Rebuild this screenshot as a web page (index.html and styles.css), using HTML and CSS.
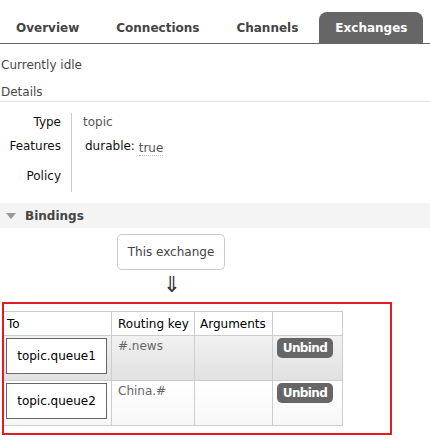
FILE: index.html
```html
<!DOCTYPE html>
<html>
<head>
<meta charset="utf-8">
<link rel="stylesheet" href="styles.css">
</head>
<body>
<nav class="tabs">
  <a class="tab">Overview</a>
  <a class="tab">Connections</a>
  <a class="tab">Channels</a>
  <a class="tab active">Exchanges</a>
</nav>
<p class="status">Currently idle</p>
<h2 class="section-title">Details</h2>
<div class="details">
  <div class="drow r1"><div class="dlabel">Type</div><div class="dvalue">topic</div></div>
  <div class="drow r2"><div class="dlabel">Features</div><div class="dvalue"><span class="key">durable:</span> <span class="flag">true</span></div></div>
  <div class="drow r3"><div class="dlabel">Policy</div><div class="dvalue"></div></div>
</div>
<div class="section-bar"><span class="tri"></span><span class="bar-title">Bindings</span></div>
<div class="source">
  <div class="exchange-box">This exchange</div>
  <div class="arrow">⇓</div>
</div>
<div class="highlight">
  <div class="bindings">
    <div class="cell head c1">To</div>
    <div class="cell head c2">Routing key</div>
    <div class="cell head c3">Arguments</div>
    <div class="cell head c4"></div>

    <div class="cell row-a c1"><div class="queue">topic.queue1</div></div>
    <div class="cell row-a c2 rk">#.news</div>
    <div class="cell row-a c3"></div>
    <div class="cell row-a c4"><span class="btn">Unbind</span></div>

    <div class="cell row-b c1"><div class="queue">topic.queue2</div></div>
    <div class="cell row-b c2 rk">China.#</div>
    <div class="cell row-b c3"></div>
    <div class="cell row-b c4"><span class="btn">Unbind</span></div>
  </div>
</div>
</body>
</html>
```

FILE: styles.css
```css
html, body {
  margin: 0;
  padding: 0;
  background: #fff;
}
body {
  font-family: "DejaVu Sans", Verdana, sans-serif;
  font-size: 12px;
  line-height: 16px;
  color: #484848;
}
.tabs {
  display: flex;
  gap: 5px;
  padding-top: 12px;
  border-bottom: 1px solid #666;
}
.tab {
  display: block;
  box-sizing: border-box;
  height: 31px;
  line-height: 29px;
  padding: 2px 16px 0;
  font-weight: bold;
  color: #444;
  border-radius: 8px 8px 0 0;
}
.tab.active {
  background: #666;
  color: #fff;
}
.status {
  margin: 13px 0 0 1px;
}
.section-title {
  margin: 11px 0 0 0;
  padding: 0 0 1px 1px;
  font-size: 12px;
  font-weight: normal;
  border-bottom: 1px solid #ddd;
}
.details {
  margin-top: 11px;
  display: flex;
  flex-direction: column;
}
.drow {
  display: grid;
  grid-template-columns: 72px auto;
}
.r1 { height: 24px; }
.r2 { height: 30px; }
.r3 { height: 25px; }
.dlabel {
  text-align: right;
  padding-right: 10px;
  padding-top: 1px;
  border-right: 1px solid #ccc;
  color: #111;
}
.dvalue {
  padding-left: 11px;
  padding-top: 1px;
  color: #555;
}
.key {
  color: #111;
  padding-left: 2px;
}
.flag {
  color: #555;
  border-bottom: 1px dotted #bbb;
  vertical-align: -2px;
}
.section-bar {
  margin-top: 11px;
  height: 25px;
  background: #f4f4f4;
  display: flex;
  align-items: center;
  gap: 9px;
  padding-left: 6px;
}
.tri {
  width: 0;
  height: 0;
  border-left: 5px solid transparent;
  border-right: 5px solid transparent;
  border-top: 6px solid #999;
}
.bar-title {
  font-weight: bold;
  color: #444;
}
.source {
  margin: 6px 0 0 117px;
  width: 108px;
  display: flex;
  flex-direction: column;
  align-items: center;
}
.exchange-box {
  box-sizing: border-box;
  width: 108px;
  height: 36px;
  line-height: 34px;
  text-align: center;
  border: 1px solid #ccc;
  border-radius: 5px;
  color: #444;
}
.arrow {
  margin-top: 4px;
  font-size: 22px;
  line-height: 22px;
  color: #333;
  padding-left: 2px;
}
.highlight {
  box-sizing: border-box;
  width: 390px;
  margin: 6px 0 0 2px;
  border: 2px solid #e31b23;
  padding: 7px 0;
}
.bindings {
  display: grid;
  grid-template-columns: 108px 83px 78px 70px;
  grid-auto-rows: auto;
  border-top: 1px solid #ccc;
  width: 339px;
}
.cell {
  box-sizing: border-box;
  border-right: 1px solid #ccc;
  border-bottom: 1px solid #ccc;
  color: #000;
}
.head {
  height: 24px;
  padding-top: 4px;
  color: #000;
}
.c1 { padding-left: 3px; }
.c2 { padding-left: 6px; }
.c3 { padding-left: 5px; }
.c4 { padding-left: 4px; }
.row-a, .row-b {
  height: 45px;
  padding-top: 2px;
}
.row-a {
  background: linear-gradient(#f1f1f1, #e1e1e1);
}
.row-b {
  background: linear-gradient(#ffffff, #f7f7f7);
}
.row-a.c1, .row-b.c1 {
  padding-left: 2px;
}
.queue {
  box-sizing: border-box;
  width: 101px;
  height: 36px;
  line-height: 34px;
  border: 1px solid #666;
  background: #fff;
  text-align: center;
  color: #000;
}
.rk {
  color: #666;
}
.btn {
  display: inline-block;
  box-sizing: border-box;
  width: 56px;
  height: 20px;
  line-height: 20px;
  text-align: center;
  background: #666;
  color: #fff;
  font-weight: bold;
  font-size: 12px;
  letter-spacing: -0.6px;
  border-radius: 5px;
}
```
